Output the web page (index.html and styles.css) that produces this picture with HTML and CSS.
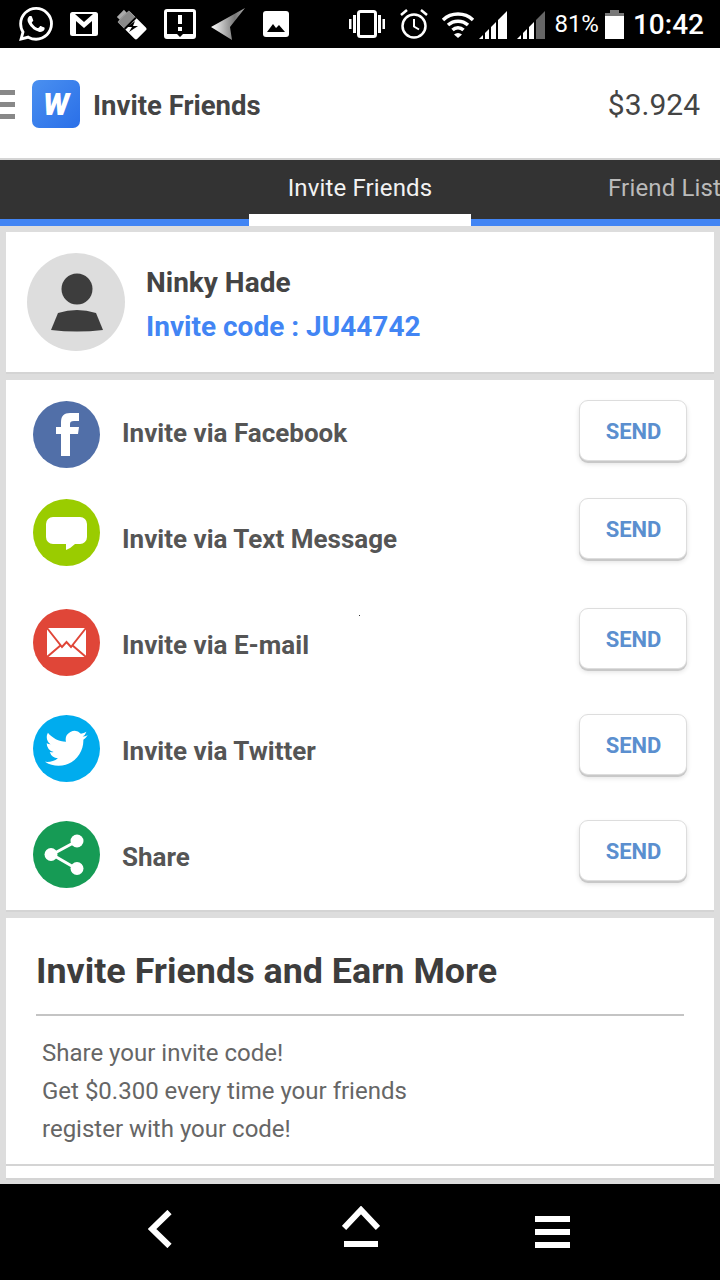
FILE: index.html
```html
<!DOCTYPE html>
<html lang="en">
<head>
<meta charset="utf-8">
<title>Invite Friends</title>
<link rel="stylesheet" href="styles.css">
</head>
<body>
<div class="screen">
  <div class="status">
    <svg class="si wa" viewBox="0 0 24 24"><path fill="#fff" d="M17.472 14.382c-.297-.149-1.758-.867-2.03-.967-.273-.099-.471-.148-.67.15-.197.297-.767.966-.94 1.164-.173.199-.347.223-.644.075-.297-.15-1.255-.463-2.39-1.475-.883-.788-1.48-1.761-1.653-2.059-.173-.297-.018-.458.13-.606.134-.133.298-.347.446-.52.149-.174.198-.298.298-.497.099-.198.05-.371-.025-.52-.075-.149-.669-1.612-.916-2.207-.242-.579-.487-.5-.669-.51-.173-.008-.371-.01-.57-.01-.198 0-.52.074-.792.372-.272.297-1.04 1.016-1.04 2.479 0 1.462 1.065 2.875 1.213 3.074.149.198 2.096 3.2 5.077 4.487.709.306 1.262.489 1.694.625.712.227 1.36.195 1.871.118.571-.085 1.758-.719 2.006-1.413.248-.694.248-1.289.173-1.413-.074-.124-.272-.198-.57-.347m-5.421 7.403h-.004a9.87 9.87 0 01-5.031-1.378l-.361-.214-3.741.982.998-3.648-.235-.374a9.86 9.86 0 01-1.51-5.26c.001-5.45 4.436-9.884 9.888-9.884 2.64 0 5.122 1.03 6.988 2.898a9.825 9.825 0 012.893 6.994c-.003 5.45-4.437 9.884-9.885 9.884m8.413-18.297A11.815 11.815 0 0012.05 0C5.495 0 .16 5.335.157 11.892c0 2.096.547 4.142 1.588 5.945L.057 24l6.305-1.654a11.882 11.882 0 005.683 1.448h.005c6.554 0 11.89-5.335 11.893-11.893a11.821 11.821 0 00-3.48-8.413z"/></svg>
    <svg class="si gm" viewBox="0 0 28 24"><rect x="1" y="1" width="26" height="22" rx="1.5" fill="#000" stroke="#fff" stroke-width="2"/><path d="M2 2h3l9 8 9-8h3v20h-4V9l-8 7-8-7v13H2z" fill="#fff"/></svg>
    <svg class="si bt" viewBox="0 0 32 32"><g transform="rotate(-45 16 16)"><rect x="8" y="5" width="16" height="26" rx="2" fill="#fff"/><rect x="8" y="5" width="16" height="10" fill="#8a8a8a"/><rect x="11" y="1" width="10" height="4" fill="#aaa"/><rect x="8" y="14" width="16" height="2" fill="#000"/></g><path d="M20 13l-8 6h5l-3 5 9-6h-5z" fill="#000"/></svg>
    <svg class="si al" viewBox="0 0 32 30"><path fill="#fff" fill-rule="evenodd" d="M3 0h26a3 3 0 013 3v24a3 3 0 01-3 3H3a3 3 0 01-3-3V3a3 3 0 013-3zm0 3v22h10l3 3 3-3h10V3z"/><rect x="14" y="6" width="4" height="9" fill="#fff"/><rect x="14" y="18" width="4" height="4" fill="#fff"/></svg>
    <svg class="si nv" viewBox="0 0 34 32"><defs><linearGradient id="nvg" x1="0" y1="0" x2="1" y2="0"><stop offset="0" stop-color="#fff"/><stop offset=".7" stop-color="#777"/><stop offset="1" stop-color="#aaa"/></linearGradient></defs><path d="M0 19L34 0 19 19 21 32z" fill="url(#nvg)"/></svg>
    <svg class="si pc" viewBox="0 0 26 26"><rect width="26" height="26" rx="3" fill="#fff"/><path d="M4 21l6-8 3 4 3-3 6 7z" fill="#000"/></svg>
    <span class="spacer"></span>
    <svg class="si vb" viewBox="0 0 36 28"><rect x="9.500" y="1.500" width="17" height="25" rx="2" fill="none" stroke="#fff" stroke-width="3"/><rect x="0" y="9" width="2.500" height="10" fill="#fff"/><rect x="4" y="5" width="3" height="18" fill="#fff"/><rect x="29" y="5" width="3" height="18" fill="#fff"/><rect x="33.500" y="9" width="2.500" height="10" fill="#fff"/></svg>
    <svg class="si ac" viewBox="0 0 30 30"><circle cx="15" cy="17" r="11.500" fill="none" stroke="#fff" stroke-width="2.500"/><path d="M15 10v7.500l5 3" fill="none" stroke="#fff" stroke-width="2"/><path d="M2 6l6-5M28 6l-6-5" stroke="#fff" stroke-width="2.500"/></svg>
    <svg class="si wf" viewBox="0 0 34 28"><path d="M2 10a22 22 0 0130 0M7 15a15 15 0 0120 0M11.500 20a8 8 0 0111 0" fill="none" stroke="#fff" stroke-width="3.500"/><path d="M13 24.500a6 6 0 018 0L17 28z" fill="#fff"/></svg>
    <svg class="si sg" viewBox="0 0 28 28"><path d="M0 28l4-4v4zM6 22l4-4v10H6zM12 16l5-5v17h-5zM19 9l9-9v28h-9z" fill="#fff"/></svg>
    <svg class="si sg2" viewBox="0 0 28 28"><path d="M0 28l4-4v4zM6 22l4-4v10H6zM12 16l5-5v17h-5z" fill="#fff"/><path d="M19 9l9-9v28h-9z" fill="#666"/></svg>
    <span class="pct">81%</span>
    <svg class="si bat" viewBox="0 0 19 29"><path d="M5 0h9v3h5v3H0V3h5z" fill="#777"/><rect y="6" width="19" height="23" fill="#fff"/></svg>
    <span class="clock">10:42</span>
  </div>

  <header class="topbar">
    <div class="burger"><i></i><i></i><i></i></div>
    <div class="logo"><span>W</span></div>
    <h1 class="title">Invite Friends</h1>
    <div class="balance">$3.924</div>
  </header>

  <nav class="tabs">
    <div class="tab active">Invite Friends</div>
    <div class="tab next">Friend List</div>
  </nav>

  <main class="main">
    <section class="card profile">
      <svg class="avatar" viewBox="0 0 98 98"><circle cx="49" cy="49" r="49" fill="#ddd"/><circle cx="50" cy="36" r="15.500" fill="#3d3d3d"/><path d="M31 60q19-6 38 0l7 17q-26 3-52 0z" fill="#3d3d3d"/></svg>
      <div class="who">
        <div class="name">Ninky Hade</div>
        <div class="code">Invite code : JU44742</div>
      </div>
    </section>

    <section class="card list">
      <span class="speck"></span>
      <div class="row r1">
        <svg class="ico" viewBox="0 0 67 67"><circle cx="33.500" cy="33.500" r="33.500" fill="#516fa8"/><path d="M28 55V33h-5v-7h5v-5c0-6 3-9 9-9h9v8h-5c-3 0-4 1-4 3v3h9l-1 7h-8v22z" fill="#fff"/></svg>
        <div class="label">Invite via Facebook</div>
        <button class="send">SEND</button>
      </div>
      <div class="row r2">
        <svg class="ico" viewBox="0 0 67 67"><circle cx="33.500" cy="33.500" r="33.500" fill="#9acc00"/><path d="M20 18h27a7 7 0 017 7v13a7 7 0 01-7 7h-5q-4 4-9 6v-6H20a7 7 0 01-7-7V25a7 7 0 017-7z" fill="#fff"/></svg>
        <div class="label">Invite via Text Message</div>
        <button class="send">SEND</button>
      </div>
      <div class="row r3">
        <svg class="ico" viewBox="0 0 67 67"><circle cx="33.500" cy="33.500" r="33.500" fill="#e04638"/><rect x="14" y="19" width="39" height="29" fill="#fff"/><path d="M14 19l15 19 4.500-5 4.500 5 15-19M14 48l14-12M53 48L39 36" fill="none" stroke="#e04638" stroke-width="2"/></svg>
        <div class="label">Invite via E-mail</div>
        <button class="send">SEND</button>
      </div>
      <div class="row r3">
        <svg class="ico" viewBox="0 0 67 67"><circle cx="33.500" cy="33.500" r="33.500" fill="#00acee"/><g transform="translate(12 12) scale(1.780)"><path fill="#fff" d="M23.953 4.570a10 10 0 01-2.825.775 4.958 4.958 0 002.163-2.723c-.951.555-2.005.959-3.127 1.184a4.920 4.920 0 00-8.384 4.482C7.690 8.095 4.067 6.130 1.640 3.162a4.822 4.822 0 00-.666 2.475c0 1.710.870 3.213 2.188 4.096a4.904 4.904 0 01-2.228-.616v.060a4.923 4.923 0 003.946 4.827 4.996 4.996 0 01-2.212.085 4.936 4.936 0 004.604 3.417 9.867 9.867 0 01-6.102 2.105c-.390 0-.779-.023-1.170-.067a13.995 13.995 0 007.557 2.209c9.053 0 13.998-7.496 13.998-13.985 0-.210 0-.420-.015-.630A9.935 9.935 0 0024 4.590z"/></g></svg>
        <div class="label">Invite via Twitter</div>
        <button class="send">SEND</button>
      </div>
      <div class="row r3">
        <svg class="ico" viewBox="0 0 67 67"><circle cx="33.500" cy="33.500" r="33.500" fill="#169b55"/><path d="M44 20L19 33.500 44 48" fill="none" stroke="#fff" stroke-width="3"/><circle cx="44" cy="20" r="6.500" fill="#fff"/><circle cx="18" cy="33.500" r="6.500" fill="#fff"/><circle cx="44" cy="47.500" r="6.500" fill="#fff"/></svg>
        <div class="label">Share</div>
        <button class="send">SEND</button>
      </div>
    </section>

    <section class="card info">
      <h2 class="heading">Invite Friends and Earn More</h2>
      <p class="desc">Share your invite code!<br>Get $0.300 every time your friends<br>register with your code!</p>
      <div class="rule"></div>
    </section>
  </main>

  <div class="softkeys">
    <svg class="k-back" viewBox="0 0 24 38"><path d="M21.500 2L4 19l17.500 17" fill="none" stroke="#fff" stroke-width="6"/></svg>
    <svg class="k-home" viewBox="0 0 38 42"><path d="M2 22L19 4l17 18" fill="none" stroke="#fff" stroke-width="6"/><rect x="2" y="35" width="34" height="6" fill="#fff"/></svg>
    <svg class="k-menu" viewBox="0 0 35 32"><rect width="35" height="6" fill="#fff"/><rect y="13" width="35" height="6" fill="#fff"/><rect y="26" width="35" height="6" fill="#fff"/></svg>
  </div>
</div>
</body>
</html>
```

FILE: styles.css
```css
* { box-sizing: border-box; }
html, body { margin: 0; padding: 0; background: #000; }
body { font-family: Roboto, "Liberation Sans", sans-serif; }
.screen { width: 720px; height: 1280px; display: flex; flex-direction: column; overflow: hidden; }

.status { height: 48px; flex: none; background: #000; display: flex; align-items: center; padding-left: 19px; color: #fff; }
.si { display: block; flex: none; }
.wa { width: 34px; height: 34px; }
.gm { width: 28px; height: 24px; margin-left: 17px; }
.bt { width: 32px; height: 32px; margin-left: 17px; }
.al { width: 32px; height: 30px; margin-left: 17px; }
.nv { width: 34px; height: 32px; margin-left: 15px; }
.pc { width: 26px; height: 26px; margin-left: 18px; }
.spacer { flex: 1; }
.vb { width: 36px; height: 28px; }
.ac { width: 30px; height: 30px; margin-left: 14px; }
.wf { width: 34px; height: 28px; margin-left: 12px; }
.sg { width: 28px; height: 28px; margin-left: 4px; margin-top: 2px; }
.sg2 { width: 28px; height: 28px; margin-left: 10px; margin-top: 2px; }
.pct { font-size: 24px; margin-left: 9px; margin-top: -1px; }
.bat { width: 19px; height: 29px; margin-left: 6px; }
.clock { font-size: 28px; font-weight: 500; margin-left: 9px; margin-right: 16px; }

.topbar { height: 112px; flex: none; background: #fff; border-bottom: 2px solid #d4d4d4; padding-top: 2px; display: flex; align-items: center; color: #444; }
.burger { width: 15px; display: flex; flex-direction: column; gap: 7px; margin-right: 17px; }
.burger i { display: block; height: 5px; background: #888; }
.logo { width: 48px; height: 48px; border-radius: 7px; background: linear-gradient(135deg, #4a90f0, #2a6fe8); display: flex; align-items: center; justify-content: center; }
.logo span { color: #fff; font: italic 900 31px Roboto, sans-serif; }
.title { margin: 2px 0 0 13px; font-size: 27.500px; font-weight: 700; flex: 1; }
.balance { font-size: 30px; margin-right: 20px; color: #444; }

.tabs { height: 66px; flex: none; background: #333; border-bottom: 7px solid #4285f4; display: flex; padding-left: 249px; }
.tab { font-size: 24px; line-height: 56px; height: 66px; white-space: nowrap; flex: none; letter-spacing: 0.15px; }
.active { width: 222px; text-align: center; color: #f2f2f2; border-bottom: 12px solid #fff; margin-bottom: -7px; }
.next { padding-left: 137px; color: #bbb; }

.main { flex: 1; background: #ddd; padding: 6px 6px 0; display: flex; flex-direction: column; gap: 8px; }
.card { background: #fff; flex: none; box-shadow: 0 2px 0 #d4d4d4; }
.profile { height: 140px; display: flex; align-items: center; padding-left: 21px; }
.avatar { width: 98px; height: 98px; flex: none; }
.who { margin: 10px 0 0 21px; }
.name { font-size: 28px; font-weight: 700; color: #444; line-height: 40px; }
.code { font-size: 28px; font-weight: 700; color: #4285f4; line-height: 48px; }

.list { position: relative; height: 530px; }
.speck { position: absolute; left: 353px; top: 235px; width: 1px; height: 1px; background: #333; }
.row { height: 106px; display: flex; align-items: flex-start; padding: 0 27px; }
.ico { width: 67px; height: 67px; flex: none; margin-top: var(--ico-top); }
.label { flex: 1; margin-left: 22px; font-size: 26px; font-weight: 700; color: #555; line-height: 106px; }
.send { width: 108px; height: 61px; margin-top: var(--btn-top); background: #fff; border: 1px solid #ddd; border-radius: 9px; box-shadow: 0 2px 0 #c8c8c8, 0 3px 5px rgba(0,0,0,.12); font: 700 22px Roboto, sans-serif; color: #5b8fcf; padding: 2px 0 0 1px; }
.r1 { --ico-top: 21px; --btn-top: 20px; }
.r2 { --ico-top: 13px; --btn-top: 12px; }
.r3 { --ico-top: 17px; --btn-top: 16px; }

.info { height: 260px; padding: 30px 0 0; }
.heading { margin: 0 30px; font-size: 35.870px; font-weight: 700; color: #3d3d3d; line-height: 46px; padding: 0 0 20px; border-bottom: 2px solid #c4c4c4; }
.desc { margin: 18px 0 0 36px; font-size: 24px; line-height: 38px; color: #666; height: 116px; }
.rule { height: 2px; background: #d4d4d4; margin-top: 14px; }

.softkeys { height: 96px; flex: none; background: #000; display: flex; align-items: flex-start; padding-left: 148px; }
.k-back { width: 24px; height: 38px; margin-top: 26px; }
.k-home { width: 38px; height: 42px; margin-left: 170px; margin-top: 22px; }
.k-menu { width: 35px; height: 32px; margin-left: 155px; margin-top: 32px; }
```
